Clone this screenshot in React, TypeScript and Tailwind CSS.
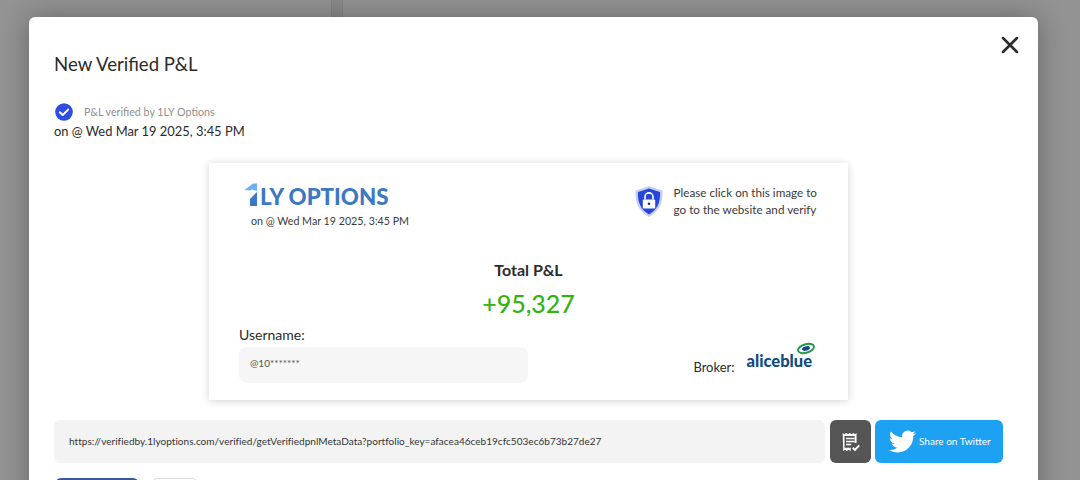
import React from 'react';
import { X } from 'lucide-react';

const font = "font-['Lato','Noto_Sans',sans-serif]";

function CheckBadge() {
  return (
    <svg width="20" height="20" viewBox="0 0 20 20" className="shrink-0">
      <circle cx="10" cy="10" r="8.8" fill="#2f4de0" />
      <path d="M5.8 10.2l2.9 2.8 5.5-5.4" fill="none" stroke="#fff" strokeWidth="2" strokeLinecap="round" strokeLinejoin="round" />
    </svg>
  );
}

function Logo() {
  return (
    <svg width="16" height="24" viewBox="0 2 16 24" className="shrink-0 overflow-visible">
      <path d="M0.5 7L9 0.5H13V8L8 6.5L6 7.5z" fill="#6db1f2" />
      <path d="M6 23V16L13 9V23z" fill="#3d78c2" />
    </svg>
  );
}

function Shield() {
  return (
    <svg width="30" height="33" viewBox="0 0 30 32" className="shrink-0">
      <path d="M15 0.5L28.5 5C29.5 17 25 26 15 31.5C5 26 0.5 17 1.5 5z" fill="#c9cff0" />
      <path d="M15 3L26 6.6C26.8 16.5 23 24.5 15 29C7 24.5 3.2 16.5 4 6.6z" fill="#2546d8" />
      <path d="M11 14v-2.6a4 4 0 018 0V14" fill="none" stroke="#fff" strokeWidth="1.6" />
      <rect x="8.8" y="14" width="12.4" height="9" rx="1" fill="#fff" />
      <circle cx="15" cy="18.2" r="1.3" fill="#1c2f8f" />
    </svg>
  );
}

function AliceSwoosh() {
  return (
    <svg width="20" height="13" viewBox="0 0 19 13" className="absolute right-[-4px] top-[-10px]">
      <ellipse cx="9.5" cy="6.5" rx="8.2" ry="4.2" transform="rotate(-16 9.5 6.5)" fill="none" stroke="#1f9a4a" strokeWidth="2" />
      <ellipse cx="9.5" cy="6.5" rx="4" ry="2.2" transform="rotate(-16 9.5 6.5)" fill="#0f4c81" />
    </svg>
  );
}

function ReceiptCheck() {
  return (
    <svg width="20" height="20" viewBox="0 0 18 18" fill="none">
      <path d="M1.5 1l1.6 1 1.6-1 1.6 1 1.6-1 1.6 1 1.6-1 1.6 1 1.3-1v8.8h-1.7V3.6H3.2v10.6h5.6v2.1l-.4.7-1.6-1-1.6 1-1.6-1-1.6 1z" fill="#fff" />
      <path d="M4.6 5.8h7.6M4.6 8.5h7.6M4.6 11.2h4.6" stroke="#fff" strokeWidth="1.4" />
      <path d="M10.6 14.2l2 2 3.8-4.2" stroke="#fff" strokeWidth="1.7" />
    </svg>
  );
}

function TwitterBird() {
  return (
    <svg width="27" height="27" viewBox="0 0 24 24" fill="#fff" className="shrink-0">
      <path d="M23.95 4.57a10 10 0 01-2.82.77 4.96 4.96 0 002.16-2.72c-.95.55-2 .95-3.12 1.18a4.92 4.92 0 00-8.38 4.48C7.69 8.1 4.07 6.13 1.64 3.16a4.82 4.82 0 00-.66 2.47c0 1.71.87 3.2 2.19 4.1a4.9 4.9 0 01-2.23-.61v.06a4.92 4.92 0 003.95 4.83 4.9 4.9 0 01-2.21.08 4.94 4.94 0 004.6 3.42A9.87 9.87 0 010 19.54a13.94 13.94 0 007.55 2.21c9.05 0 14-7.5 14-13.98 0-.21 0-.42-.02-.63a9.94 9.94 0 002.42-2.57z" />
    </svg>
  );
}

export default function App() {
  return (
    <div className={`${font} relative h-[480px] w-[1080px] overflow-hidden bg-[#939393] pl-[29px] pt-[17px] text-[#2b2b2b]`}>
      {/* page behind the overlay */}
      <div className="absolute left-[331px] top-0 h-[17px] w-[12px] border-x border-[#858585] bg-[#8a8a8a]" />

      <div className="relative h-[520px] w-[1009px] rounded-md bg-white px-[25px] pt-[34px] shadow-[0_0_28px_rgba(0,0,0,0.3)]">
        <button className="absolute right-[14px] top-[14px] text-[#2b2b2b]">
          <X size={28} strokeWidth={2.2} />
        </button>

        <h2 className="text-[18.6px] leading-[26px]">New Verified P&amp;L</h2>

        <div className="mt-[25px] flex items-center gap-[10px]">
          <CheckBadge />
          <span className="text-[10.7px] leading-[14px] text-[#8f8f8f]">P&amp;L verified by 1LY Options</span>
        </div>
        <p className="text-[12.9px] leading-[18px]">on @ Wed Mar 19 2025, 3:45 PM</p>

        {/* verified card */}
        <div className="ml-[155px] mt-[23px] h-[237px] w-[639px] bg-white px-[30px] pt-[20px] shadow-[0_1px_8px_rgba(0,0,0,0.18)]">
          <div className="flex justify-between">
            <div className="pl-[5px]">
              <div className="flex h-[26px] items-center pt-[2px]">
                <Logo />
                <span className="text-[22.3px] font-black leading-[24px] text-[#3d78c2]">LY OPTIONS</span>
              </div>
              <p className="mt-[5px] pl-[7px] text-[10.7px] leading-[14px] text-[#3a3a3a]">on @ Wed Mar 19 2025, 3:45 PM</p>
            </div>
            <div className="flex items-center gap-[10px] self-start pr-[1px] pt-[1px]">
              <Shield />
              <p className="text-[11.7px] leading-[17px] text-[#3a3a3a]">
                Please click on this image to<br />go to the website and verify
              </p>
            </div>
          </div>

          <div className="mt-[32px] text-center">
            <p className="text-[16px] font-bold leading-[20px]">Total P&amp;L</p>
            <p className="mt-[6px] text-[25px] font-medium leading-[34px] text-[#35b30c]">+95,327</p>
          </div>

          <div className="mt-[6px] flex items-end justify-between">
            <div>
              <p className="text-[14px] leading-[18px]">Username:</p>
              <div className="mt-[3px] h-[36px] w-[289px] rounded-lg bg-[#f6f6f6] pl-[11px] pt-[9px] text-[10px] leading-[14px] text-[#555]">@10*******</div>
            </div>
            <div className="flex items-center gap-[12px] pb-[1px] pr-[6px]">
              <span className="text-[13px] leading-[18px]">Broker:</span>
              <span className="relative mb-[12px] text-[16.5px] font-black leading-[18px] text-[#0f4c81]">
                aliceblue
                <AliceSwoosh />
              </span>
            </div>
          </div>
        </div>

        {/* link + actions */}
        <div className="mt-[20px] flex">
          <div className="flex h-[43px] w-[771px] items-center rounded-md bg-[#f3f3f3] pl-[15px] text-[10px] tracking-[0.03px] text-[#333]">
            https://verifiedby.1lyoptions.com/verified/getVerifiedpnlMetaData?portfolio_key=afacea46ceb19cfc503ec6b73b27de27
          </div>
          <button className="ml-[5px] flex h-[43px] w-[41px] items-center justify-center rounded-md bg-[#555555]">
            <ReceiptCheck />
          </button>
          <button className="ml-[4px] flex h-[43px] w-[128px] items-center gap-[3px] rounded-md bg-[#1da1f2] pl-[14px] text-[10px] text-white">
            <TwitterBird />
            Share on Twitter
          </button>
        </div>

        <div className="mt-[15px] flex gap-[12px]">
          <div className="ml-[1px] h-[30px] w-[84px] rounded-md bg-[#3b5998]" />
          <div className="h-[30px] w-[47px] rounded-md border border-[#ddd] bg-white" />
        </div>
      </div>
    </div>
  );
}
